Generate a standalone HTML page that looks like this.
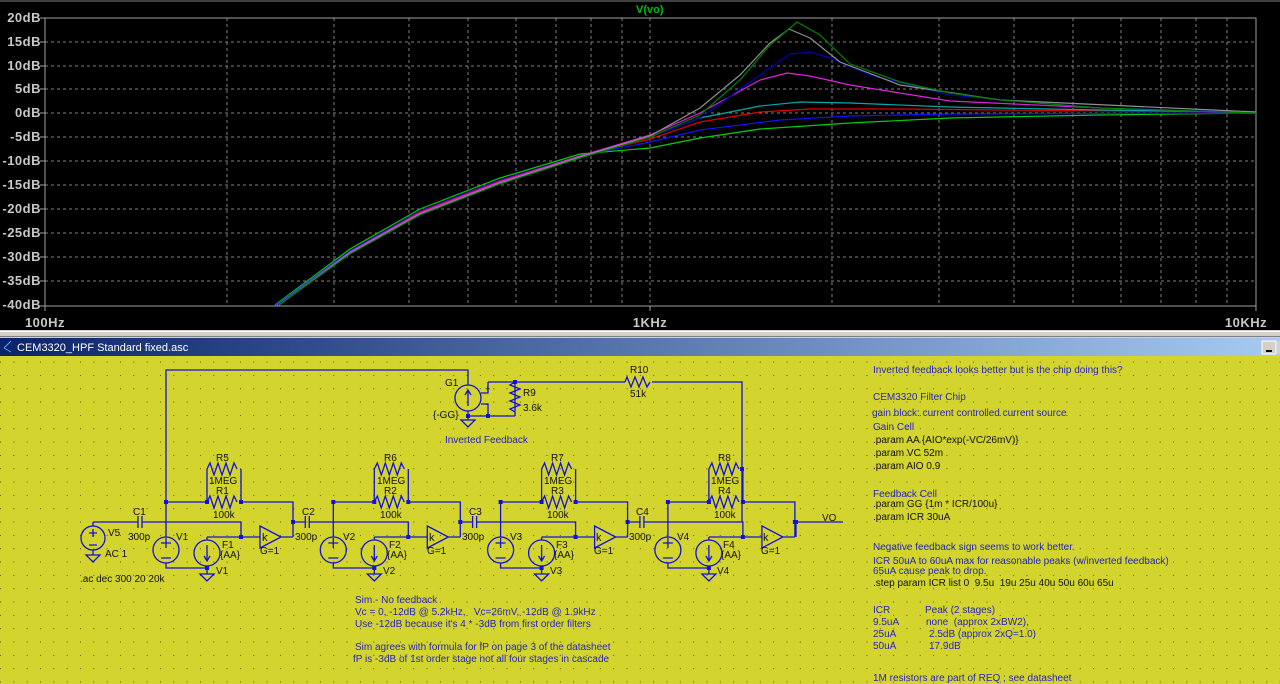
<!DOCTYPE html>
<html><head><meta charset="utf-8"><style>
html,body{margin:0;padding:0;background:#000;width:1280px;height:684px;overflow:hidden}
svg{display:block}
.ax{font-family:"Liberation Sans",sans-serif;font-size:13px;font-weight:bold;letter-spacing:0.5px;fill:#c8c8c8}
.lb{font-family:"Liberation Sans",sans-serif;font-size:10px;fill:#101010}
.cm{font-family:"Liberation Sans",sans-serif;font-size:10px;fill:#2424c0}
.dr{font-family:"Liberation Sans",sans-serif;font-size:10px;fill:#101010}
.w{stroke:#1010e0;stroke-width:1.3;fill:none}
.d{fill:#1010e0}
</style></head><body>
<svg width="1280" height="684" viewBox="0 0 1280 684" xmlns="http://www.w3.org/2000/svg">
<defs>
<pattern id="dots" x="0" y="1.7" width="13.33" height="13.33" patternUnits="userSpaceOnUse">
<rect x="0" y="0" width="1" height="1" fill="#505010"/>
</pattern>
<linearGradient id="tb" x1="0" x2="1" y1="0" y2="0">
<stop offset="0" stop-color="#0a246a"/><stop offset="1" stop-color="#a6caf0"/>
</linearGradient>
</defs>
<rect x="0" y="0" width="1280" height="330" fill="#000"/>
<rect x="0" y="0" width="1280" height="2" fill="#404040"/>
<text x="636" y="13" style="font-family:'Liberation Sans',sans-serif;font-size:11px;font-weight:bold;fill:#00c000">V(vo)</text>
<g stroke="#808080" stroke-width="1" stroke-dasharray="3,3">
<path d="M45,42H1256M45,66H1256M45,89H1256M45,113H1256M45,137H1256M45,161H1256M45,185H1256M45,209H1256M45,233H1256M45,257H1256M45,281H1256"/>
<path d="M227,18V306M334,18V306M409,18V306M468,18V306M516,18V306M556,18V306M591,18V306M622,18V306M650,18V306M832,18V306M939,18V306M1014,18V306M1073,18V306M1121,18V306M1161,18V306M1196,18V306M1227,18V306"/>
</g>
<rect x="45" y="18" width="1211" height="288" fill="none" stroke="#a0a0a0" stroke-width="1"/>
<g stroke="#a0a0a0"><path d="M40,18H45M40,42H45M40,66H45M40,89H45M40,113H45M40,137H45M40,161H45M40,185H45M40,209H45M40,233H45M40,257H45M40,281H45M40,306H45M45,306V311M650,306V311M1256,306V311"/></g>
<g class="ax" text-anchor="end">
<text x="41" y="22">20dB</text><text x="41" y="46">15dB</text><text x="41" y="70">10dB</text><text x="41" y="93">5dB</text><text x="41" y="117">0dB</text><text x="41" y="141">-5dB</text><text x="41" y="165">-10dB</text><text x="41" y="189">-15dB</text><text x="41" y="213">-20dB</text><text x="41" y="237">-25dB</text><text x="41" y="261">-30dB</text><text x="41" y="285">-35dB</text><text x="41" y="309">-40dB</text>
</g>
<g class="ax" text-anchor="middle"><text x="45" y="327">100Hz</text><text x="650" y="327">1KHz</text><text x="1246" y="327">10KHz</text></g>
<g fill="none" stroke-width="1.2">
<polyline stroke="#00d000" points="275,305 350,249 420,209 500,178 580,154 650,148 700,138 760,129 850,123 950,118 1100,115 1256,113"/>
<polyline stroke="#1010ff" points="276,305 350,251 420,211 500,180 580,156 650,142 700,130 780,120 850,116 950,114 1256,113"/>
<polyline stroke="#e00000" points="277,305 350,252 420,212 500,181 580,156 650,139 700,122 760,112 810,109 900,109 1000,110 1256,112"/>
<polyline stroke="#00a8a8" points="277,305 350,252 420,213 500,182 580,156 650,137 700,118 760,106 800,102 850,103 950,107 1100,110 1256,112"/>
<polyline stroke="#e020e0" points="278,305 350,252 420,213 500,182 580,156 650,135 700,113 760,80 787,73 810,76 850,85 950,101 1100,108 1256,113"/>
<polyline stroke="#0000b0" points="278,305 350,253 420,214 500,183 580,157 650,137 700,118 750,82 790,54 810,52 830,58 870,75 950,95 1100,108 1256,112"/>
<polyline stroke="#909090" points="279,305 350,253 420,214 500,183 580,157 650,136 700,108 740,75 770,43 789,29 810,38 840,62 900,85 1000,100 1256,112"/>
<polyline stroke="#008000" points="279,305 350,254 420,215 500,184 580,158 650,137 700,115 740,80 770,45 797,22 820,35 850,64 900,82 950,93 1000,100 1100,108 1256,113"/>
</g>
<rect x="0" y="330" width="1280" height="9" fill="#d4d0c8"/>
<rect x="0" y="331" width="1280" height="1" fill="#ffffff"/>
<rect x="0" y="336" width="1280" height="1" fill="#808080"/>
<rect x="0" y="338" width="1280" height="18" fill="url(#tb)"/>
<text x="17" y="351" style="font-family:'Liberation Sans',sans-serif;font-size:11px;fill:#fff">CEM3320_HPF Standard fixed.asc</text>
<path d="M4,348 L11,341 M4,348 L11,352" stroke="#60a0ff" stroke-width="1"/>
<rect x="1262" y="341" width="14" height="13" fill="#d4d0c8" stroke="#fff"/>
<rect x="1266" y="350" width="6" height="2" fill="#000"/>
<rect x="1277" y="341" width="3" height="13" fill="#d4d0c8"/>
<rect x="0" y="356" width="1280" height="328" fill="#d4d42e"/>
<rect x="0" y="356" width="1280" height="328" fill="url(#dots)"/>
<path class="w" d="M166,502V370H468V385 M468,411V416H515 M515,382V416 M488,382H625 M652,382H742V522 M481,393H488V382 M481,404H488V416 M468,416V420"/>
<path class="w" d="M625,382l2,-5 4,10 4,-10 4,10 4,-10 4,10 3,-5 M515,382l-5,3 10,4 -10,4 10,4 -10,4 10,4 -10,4 5,3"/>
<circle class="w" cx="468" cy="398" r="13"/>
<path class="w" d="M468,406V391 M465,395L468,390 471,395"/>
<path class="w" d="M461,420H475L468,427Z"/>
<rect class="d" x="466" y="414" width="4" height="4"/><rect class="d" x="486" y="414" width="4" height="4"/><rect class="d" x="513" y="380" width="4" height="4"/>
<rect class="d" x="740" y="467" width="4" height="4"/>
<text class="lb" x="445" y="386">G1</text><text class="lb" x="433" y="418">{-GG}</text>
<text class="lb" x="485" y="392" style="font-size:9px">+</text><text class="lb" x="485" y="407" style="font-size:9px">-</text>
<text class="lb" x="523" y="396">R9</text><text class="lb" x="523" y="411">3.6k</text>
<text class="lb" x="630" y="373">R10</text><text class="lb" x="630" y="397">51k</text>
<text class="cm" x="445" y="443">Inverted Feedback</text>
<path class="w" d="M93,522V526 M93,550V555 M86,555H100L93,562Z M93,522H127"/>
<circle class="w" cx="93" cy="538" r="12"/>
<path class="w" d="M89,533H97M93,529V537M89,545H97"/>
<text class="lb" x="108" y="536">V5</text><text class="lb" x="105" y="557">AC 1</text>
<text class="dr" x="80" y="582">.ac dec 300 20 20k</text>
<path class="w" d="M796,537V522H843"/>
<text class="lb" x="822" y="521">VO</text>
<g>
<path class="w" d="M166,502V537 M166,502H207 M241,502H293V537 M281,537H293 M207,469V502 M241,469V502 M127,522H138 M142,522H241V537 M207,537H260 M207,537V540 M166,563V568H207V566 M207,568V574 M200,574H214L207,581Z"/>
<path class="w" d="M207,469l3,-6 4,12 4,-12 4,12 4,-12 4,12 4,-12 3,6 M207,502l3,-6 4,12 4,-12 4,12 4,-12 4,12 4,-12 3,6"/>
<path class="w" d="M138,516V528M142,516V528"/>
<circle class="w" cx="166" cy="550" r="13"/>
<path class="w" d="M161,543H171M166,538V548M161,558H171"/>
<circle class="w" cx="207" cy="553" r="13"/>
<path class="w" d="M207,545V560 M204,556L207,561 210,556"/>
<path class="w" d="M260,526L281,537 260,548Z"/>
<rect class="d" x="164" y="500" width="4" height="4"/><rect class="d" x="205" y="500" width="4" height="4"/><rect class="d" x="239" y="500" width="4" height="4"/><rect class="d" x="239" y="535" width="4" height="4"/><rect class="d" x="205" y="566" width="4" height="4"/><rect class="d" x="291" y="520" width="4" height="4"/>
</g>
<g transform="translate(167.3,0)">
<path class="w" d="M166,502V537 M166,502H207 M241,502H293V537 M281,537H293 M207,469V502 M241,469V502 M127,522H138 M142,522H241V537 M207,537H260 M207,537V540 M166,563V568H207V566 M207,568V574 M200,574H214L207,581Z"/>
<path class="w" d="M207,469l3,-6 4,12 4,-12 4,12 4,-12 4,12 4,-12 3,6 M207,502l3,-6 4,12 4,-12 4,12 4,-12 4,12 4,-12 3,6"/>
<path class="w" d="M138,516V528M142,516V528"/>
<circle class="w" cx="166" cy="550" r="13"/><path class="w" d="M161,543H171M166,538V548M161,558H171"/>
<circle class="w" cx="207" cy="553" r="13"/><path class="w" d="M207,545V560 M204,556L207,561 210,556"/>
<path class="w" d="M260,526L281,537 260,548Z"/>
<rect class="d" x="164" y="500" width="4" height="4"/><rect class="d" x="205" y="500" width="4" height="4"/><rect class="d" x="239" y="500" width="4" height="4"/><rect class="d" x="239" y="535" width="4" height="4"/><rect class="d" x="205" y="566" width="4" height="4"/><rect class="d" x="291" y="520" width="4" height="4"/>
</g>
<g transform="translate(334.6,0)">
<path class="w" d="M166,502V537 M166,502H207 M241,502H293V537 M281,537H293 M207,469V502 M241,469V502 M127,522H138 M142,522H241V537 M207,537H260 M207,537V540 M166,563V568H207V566 M207,568V574 M200,574H214L207,581Z"/>
<path class="w" d="M207,469l3,-6 4,12 4,-12 4,12 4,-12 4,12 4,-12 3,6 M207,502l3,-6 4,12 4,-12 4,12 4,-12 4,12 4,-12 3,6"/>
<path class="w" d="M138,516V528M142,516V528"/>
<circle class="w" cx="166" cy="550" r="13"/><path class="w" d="M161,543H171M166,538V548M161,558H171"/>
<circle class="w" cx="207" cy="553" r="13"/><path class="w" d="M207,545V560 M204,556L207,561 210,556"/>
<path class="w" d="M260,526L281,537 260,548Z"/>
<rect class="d" x="164" y="500" width="4" height="4"/><rect class="d" x="205" y="500" width="4" height="4"/><rect class="d" x="239" y="500" width="4" height="4"/><rect class="d" x="239" y="535" width="4" height="4"/><rect class="d" x="205" y="566" width="4" height="4"/><rect class="d" x="291" y="520" width="4" height="4"/>
</g>
<g transform="translate(501.9,0)">
<path class="w" d="M166,502V537 M166,502H207 M241,502H293V537 M281,537H293 M207,469V502 M241,469V502 M127,522H138 M142,522H241V537 M207,537H260 M207,537V540 M166,563V568H207V566 M207,568V574 M200,574H214L207,581Z"/>
<path class="w" d="M207,469l3,-6 4,12 4,-12 4,12 4,-12 4,12 4,-12 3,6 M207,502l3,-6 4,12 4,-12 4,12 4,-12 4,12 4,-12 3,6"/>
<path class="w" d="M138,516V528M142,516V528"/>
<circle class="w" cx="166" cy="550" r="13"/><path class="w" d="M161,543H171M166,538V548M161,558H171"/>
<circle class="w" cx="207" cy="553" r="13"/><path class="w" d="M207,545V560 M204,556L207,561 210,556"/>
<path class="w" d="M260,526L281,537 260,548Z"/>
<rect class="d" x="164" y="500" width="4" height="4"/><rect class="d" x="205" y="500" width="4" height="4"/><rect class="d" x="239" y="500" width="4" height="4"/><rect class="d" x="239" y="535" width="4" height="4"/><rect class="d" x="205" y="566" width="4" height="4"/><rect class="d" x="291" y="520" width="4" height="4"/>
</g>
<g class="lb">
<text x="216" y="461">R5</text><text x="209" y="484">1MEG</text><text x="216" y="494">R1</text><text x="213" y="518">100k</text>
<text x="133" y="515">C1</text><text x="128" y="540">300p</text><text x="176" y="540">V1</text><text x="222" y="548">F1</text><text x="220" y="558">{AA}</text><text x="216" y="574">V1</text><text x="262" y="541" style="font-size:11px">k</text><text x="260" y="554">G=1</text>
<text x="384" y="461">R6</text><text x="377" y="484">1MEG</text><text x="384" y="494">R2</text><text x="380" y="518">100k</text>
<text x="302" y="515">C2</text><text x="295" y="540">300p</text><text x="343" y="540">V2</text><text x="389" y="548">F2</text><text x="387" y="558">{AA}</text><text x="383" y="574">V2</text><text x="429" y="541" style="font-size:11px">k</text><text x="427" y="554">G=1</text>
<text x="551" y="461">R7</text><text x="544" y="484">1MEG</text><text x="551" y="494">R3</text><text x="547" y="518">100k</text>
<text x="469" y="515">C3</text><text x="462" y="540">300p</text><text x="510" y="540">V3</text><text x="556" y="548">F3</text><text x="554" y="558">{AA}</text><text x="550" y="574">V3</text><text x="596" y="541" style="font-size:11px">k</text><text x="594" y="554">G=1</text>
<text x="718" y="461">R8</text><text x="711" y="484">1MEG</text><text x="718" y="494">R4</text><text x="714" y="518">100k</text>
<text x="636" y="515">C4</text><text x="629" y="540">300p</text><text x="677" y="540">V4</text><text x="723" y="548">F4</text><text x="721" y="558">{AA}</text><text x="717" y="574">V4</text><text x="763" y="541" style="font-size:11px">k</text><text x="761" y="554">G=1</text>
</g>
<rect class="d" x="794" y="520" width="4" height="4"/>
<g class="cm">
<text x="355" y="603">Sim - No feedback</text>
<text x="355" y="615">Vc = 0, -12dB @ 5.2kHz,&#160;&#160; Vc=26mV, -12dB @ 1.9kHz</text>
<text x="355" y="627">Use -12dB because it's 4 * -3dB from first order filters</text>
<text x="355" y="650">Sim agrees with formula for fP on page 3 of the datasheet</text>
<text x="353" y="662">fP is -3dB of 1st order stage not all four stages in cascade</text>
</g>
<g class="cm">
<text x="873" y="373">Inverted feedback looks better but is the chip doing this?</text>
<text x="873" y="400">CEM3320 Filter Chip</text>
<text x="872" y="416">gain block: current controlled current source</text>
<text x="873" y="430">Gain Cell</text>
<text x="873" y="497">Feedback Cell</text>
<text x="873" y="550">Negative feedback sign seems to work better.</text>
<text x="873" y="564">ICR 50uA to 60uA max for reasonable peaks (w/inverted feedback)</text>
<text x="873" y="574">65uA cause peak to drop.</text>
<text x="873" y="613">ICR</text><text x="925" y="613">Peak (2 stages)</text>
<text x="873" y="625">9.5uA</text><text x="926" y="625">none&#160; (approx 2xBW2),</text>
<text x="873" y="637">25uA</text><text x="929" y="637">2.5dB (approx 2xQ=1.0)</text>
<text x="873" y="649">50uA</text><text x="929" y="649">17.9dB</text>
<text x="873" y="681">1M resistors are part of REQ ; see datasheet</text>
</g>
<g class="dr">
<text x="873" y="443">.param AA {AIO*exp(-VC/26mV)}</text>
<text x="873" y="456">.param VC 52m</text>
<text x="873" y="469">.param AIO 0.9</text>
<text x="873" y="507">.param GG {1m * ICR/100u}</text>
<text x="873" y="520">.param ICR 30uA</text>
<text x="873" y="586">.step param ICR list 0&#160; 9.5u&#160; 19u 25u 40u 50u 60u 65u</text>
</g>
</svg>
</body></html>
